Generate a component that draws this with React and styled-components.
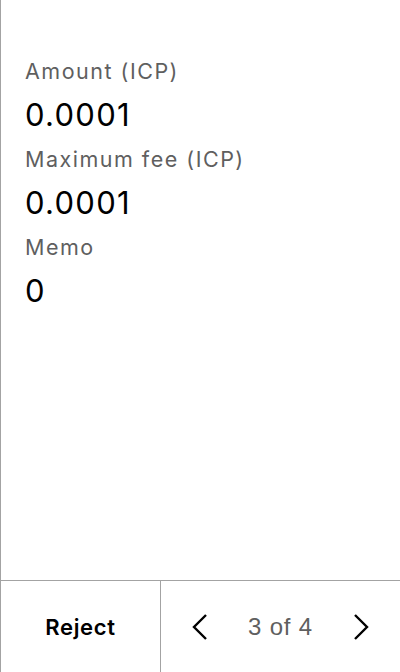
import React from "react";
import styled, { createGlobalStyle } from "styled-components";

const GlobalStyle = createGlobalStyle`
  html, body, #root {
    margin: 0;
    padding: 0;
    height: 100%;
  }
  body {
    background: #ffffff;
    font-family: Inter, "Noto Sans", sans-serif;
  }
`;

const Screen = styled.div`
  height: 672px;
  width: 400px;
  box-sizing: border-box;
  border-left: 1px solid #a3a3a3;
  display: flex;
  flex-direction: column;
`;

const Details = styled.dl`
  flex: 1;
  margin: 0;
  padding: 57px 24px 0 24px;
`;

const Label = styled.dt`
  font-size: 21.5px;
  line-height: 28px;
  letter-spacing: 1.5px;
  color: #5f5f5f;
`;

const Value = styled.dd`
  margin: 8px 0;
  font-size: 31px;
  line-height: 44px;
  letter-spacing: 1.3px;
  color: #000;
`;

const Footer = styled.div`
  height: 92px;
  box-sizing: border-box;
  border-top: 1px solid #a3a3a3;
  display: flex;
`;

const RejectButton = styled.button`
  width: 160px;
  border: none;
  border-right: 1px solid #a3a3a3;
  background: none;
  font-family: Inter, "Noto Sans", sans-serif;
  font-weight: 600;
  font-size: 22px;
  letter-spacing: 0.7px;
  color: #000;
  padding: 0;
`;

const Pager = styled.div`
  flex: 1;
  display: flex;
  align-items: center;
  justify-content: space-between;
  padding: 0 31px 0 31px;
`;

const Arrow = styled.button`
  border: none;
  background: none;
  padding: 0;
  display: flex;
  align-items: center;
`;

const PageText = styled.span`
  font-family: "Liberation Sans", Arial, sans-serif;
  font-size: 24px;
  letter-spacing: 0.8px;
  color: #5f5f5f;
`;

const Chevron = ({ dir }) => (
  <svg width="16" height="26" viewBox="0 0 16 26" fill="none">
    <path
      d={dir === "left" ? "M14 1 L2 13 L14 25" : "M2 1 L14 13 L2 25"}
      stroke="#000"
      strokeWidth="2.4"
    />
  </svg>
);

const fields = [
  { label: "Amount (ICP)", value: "0.0001" },
  { label: "Maximum fee (ICP)", value: "0.0001" },
  { label: "Memo", value: "0" },
];

export default function App() {
  return (
    <>
      <GlobalStyle />
      <Screen>
        <Details>
          {fields.map((f) => (
            <React.Fragment key={f.label}>
              <Label>{f.label}</Label>
              <Value>{f.value}</Value>
            </React.Fragment>
          ))}
        </Details>
        <Footer>
          <RejectButton>Reject</RejectButton>
          <Pager>
            <Arrow>
              <Chevron dir="left" />
            </Arrow>
            <PageText>3 of 4</PageText>
            <Arrow>
              <Chevron dir="right" />
            </Arrow>
          </Pager>
        </Footer>
      </Screen>
    </>
  );
}
